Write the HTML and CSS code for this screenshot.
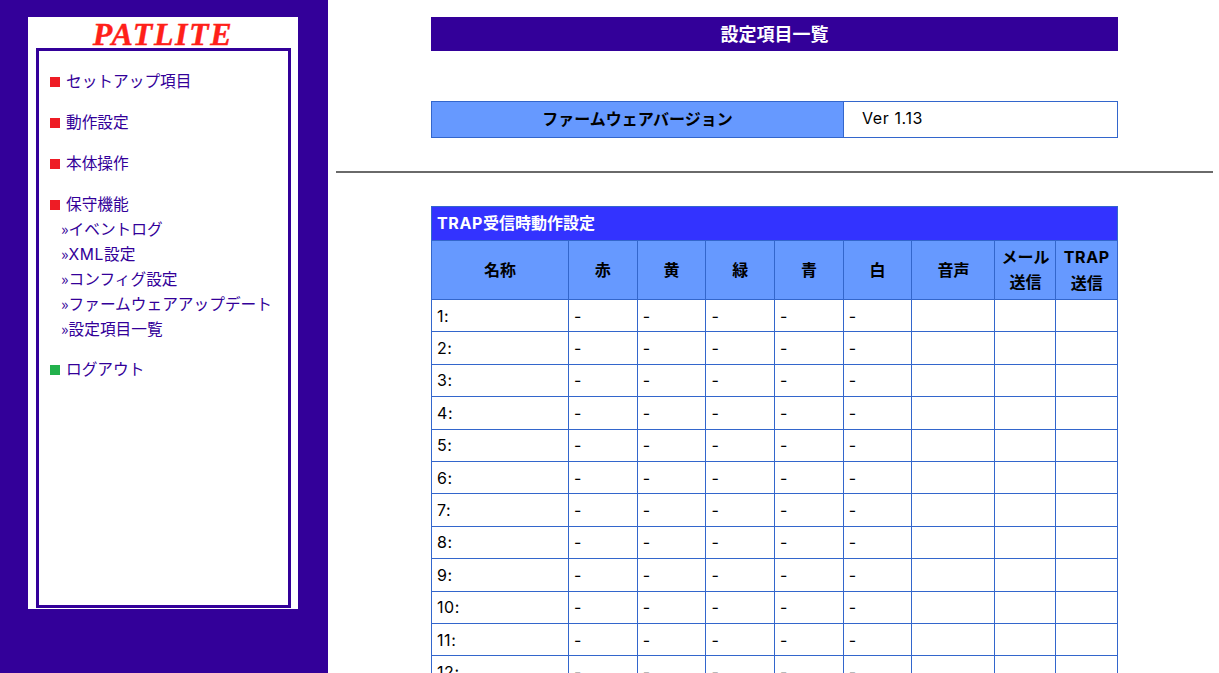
FILE: index.html
```html
<!DOCTYPE html>
<html lang="ja">

<head>
    <meta charset="UTF-8">
    <title>設定項目一覧</title>
    <link rel="stylesheet" href="styles.css">
</head>

<body>
    <aside class="side">
        <div class="card">
            <div class="logo">PATLITE</div>
            <nav class="menu">
                <a class="item" href="#">セットアップ項目</a>
                <a class="item" href="#">動作設定</a>
                <a class="item" href="#">本体操作</a>
                <a class="item" href="#">保守機能</a>
                <div class="sub">
                    <a href="#">»イベントログ</a>
                    <a href="#">»<span class="en">XML</span>設定</a>
                    <a href="#">»コンフィグ設定</a>
                    <a href="#">»ファームウェアアップデート</a>
                    <a href="#">»設定項目一覧</a>
                </div>
                <a class="item logout" href="#">ログアウト</a>
            </nav>
        </div>
    </aside>
    <main class="main">
        <h1 class="page-title">設定項目一覧</h1>
        <table class="version">
            <tr>
                <th>ファームウェアバージョン</th>
                <td>Ver 1.13</td>
            </tr>
        </table>
        <hr class="rule">
        <table class="grid">
            <colgroup>
                <col class="c-name">
                <col class="c-led">
                <col class="c-led">
                <col class="c-led">
                <col class="c-led">
                <col class="c-led">
                <col class="c-voice">
                <col class="c-mail">
                <col class="c-trap">
            </colgroup>
            <tr>
                <th class="caption" colspan="9"><span class="en">TRAP</span>受信時動作設定</th>
            </tr>
            <tr class="head">
                <th>名称</th>
                <th>赤</th>
                <th>黄</th>
                <th>緑</th>
                <th>青</th>
                <th>白</th>
                <th>音声</th>
                <th>メール<br>送信</th>
                <th><span class="en">TRAP</span><br>送信</th>
            </tr>
            <tr><td>1:</td><td>-</td><td>-</td><td>-</td><td>-</td><td>-</td><td></td><td></td><td></td></tr>
            <tr><td>2:</td><td>-</td><td>-</td><td>-</td><td>-</td><td>-</td><td></td><td></td><td></td></tr>
            <tr><td>3:</td><td>-</td><td>-</td><td>-</td><td>-</td><td>-</td><td></td><td></td><td></td></tr>
            <tr><td>4:</td><td>-</td><td>-</td><td>-</td><td>-</td><td>-</td><td></td><td></td><td></td></tr>
            <tr><td>5:</td><td>-</td><td>-</td><td>-</td><td>-</td><td>-</td><td></td><td></td><td></td></tr>
            <tr><td>6:</td><td>-</td><td>-</td><td>-</td><td>-</td><td>-</td><td></td><td></td><td></td></tr>
            <tr><td>7:</td><td>-</td><td>-</td><td>-</td><td>-</td><td>-</td><td></td><td></td><td></td></tr>
            <tr><td>8:</td><td>-</td><td>-</td><td>-</td><td>-</td><td>-</td><td></td><td></td><td></td></tr>
            <tr><td>9:</td><td>-</td><td>-</td><td>-</td><td>-</td><td>-</td><td></td><td></td><td></td></tr>
            <tr><td>10:</td><td>-</td><td>-</td><td>-</td><td>-</td><td>-</td><td></td><td></td><td></td></tr>
            <tr><td>11:</td><td>-</td><td>-</td><td>-</td><td>-</td><td>-</td><td></td><td></td><td></td></tr>
            <tr><td>12:</td><td>-</td><td>-</td><td>-</td><td>-</td><td>-</td><td></td><td></td><td></td></tr>
        </table>
    </main>
</body>

</html>
```

FILE: styles.css
```css
html,
body {
    height: 100%;
}

body {
    margin: 0;
    display: flex;
    overflow: hidden;
    background: #fff;
    color: #000;
    font-family: "Noto Sans CJK JP", sans-serif;
    font-size: 16px;
}

a {
    color: #330099;
    text-decoration: none;
}

/* latin runs are wider in the original font */
.en {
    font-family: Inter, sans-serif;
    letter-spacing: 0.6px;
}

/* left menu */
.side {
    flex: 0 0 328px;
    box-sizing: border-box;
    padding: 17px 0 0 28px;
    background: #330099;
}

.card {
    width: 270px;
    height: 592px;
    box-sizing: border-box;
    padding-left: 8px;
    background: #fff;
}

.logo {
    height: 31px;
    margin-left: -8px;
    color: #ff2019;
    font-family: "Liberation Serif", serif;
    font-size: 32px;
    font-weight: bold;
    font-style: italic;
    letter-spacing: 1.6px;
    line-height: 35px;
    text-align: center;
    -webkit-text-stroke: 0.4px #ff2019;
}

.menu {
    width: 255px;
    height: 560px;
    box-sizing: border-box;
    padding-top: 17px;
    border: 3px solid #330099;
    font-size: 15.7px;
}

.item {
    display: flex;
    align-items: center;
    height: 25px;
    margin-bottom: 16px;
    padding-left: 11px;
    line-height: 25px;
}

.item::before {
    content: "";
    flex: none;
    width: 10px;
    height: 10px;
    margin: 2px 6px 0 0;
    background: #ee1c25;
}

.logout::before {
    background: #22b14c;
}

.sub {
    margin: -16px 0 15px;
    padding-left: 22px;
}

.sub a {
    display: block;
    height: 25px;
    line-height: 25px;
}

/* right content */
.main {
    flex: 1;
    box-sizing: border-box;
    height: 100%;
    padding: 17px 6px 0 8px;
    overflow: hidden;
}

.page-title {
    width: 687px;
    height: 34px;
    margin: 0 0 50px 95px;
    background: #330099;
    color: #fff;
    font-size: 18px;
    font-weight: bold;
    line-height: 33px;
    text-align: center;
}

.version {
    width: 687px;
    height: 37px;
    margin-left: 95px;
    border-collapse: collapse;
}

.version th,
.version td {
    border: 1px solid #3366cc;
    padding: 0 0 3px;
}

.version th {
    width: 411px;
    background: #6699ff;
    font-size: 16px;
}

.version td {
    padding-left: 18px;
    font-family: Inter, sans-serif;
    letter-spacing: 0.6px;
}

.rule {
    height: 2px;
    box-sizing: border-box;
    margin: 33px 0 33px;
    border: 0;
    background: #6a6a6a;
}

.grid {
    width: 687px;
    margin-left: 95px;
    border-collapse: collapse;
    table-layout: fixed;
}

.c-name {
    width: 137px;
}

.c-led {
    width: 68.7px;
}

.c-voice {
    width: 83px;
}

.c-mail {
    width: 61px;
}

.grid th,
.grid td {
    border: 1px solid #3366cc;
    padding: 0 0 0 5px;
}

.grid td {
    height: 31.4px;
    font-family: Inter, sans-serif;
    letter-spacing: 0.6px;
    line-height: 24px;
    text-align: left;
}

.grid .caption {
    height: 31px;
    padding-bottom: 2px;
    background: #3333ff;
    color: #fff;
    line-height: 24px;
    text-align: left;
}

.head th {
    height: 56px;
    padding: 0 0 2px;
    background: #6699ff;
    line-height: 25px;
    text-align: center;
}
```
